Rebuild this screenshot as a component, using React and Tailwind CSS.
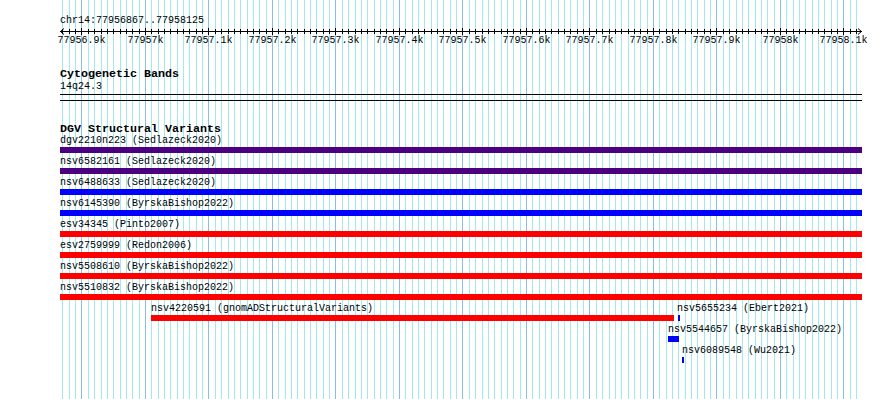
import React from "react";

const START = 77956867;
const X0 = 60.5;
const PX = 0.635;
const xOf = (bp) => Math.round(X0 + (bp - START) * PX) + 0.5;

const minor = [];
for (let bp = 77956870; bp <= 77958120; bp += 10) minor.push(bp);

const labels = [
  [77956900, "77956.9k"],
  [77957000, "77957k"],
  [77957100, "77957.1k"],
  [77957200, "77957.2k"],
  [77957300, "77957.3k"],
  [77957400, "77957.4k"],
  [77957500, "77957.5k"],
  [77957600, "77957.6k"],
  [77957700, "77957.7k"],
  [77957800, "77957.8k"],
  [77957900, "77957.9k"],
  [77958000, "77958k"],
  [77958100, "77958.1k"],
];

const fullRows = [
  { name: "dgv2210n223 (Sedlazeck2020)", color: "bg-[#4b0082]" },
  { name: "nsv6582161 (Sedlazeck2020)", color: "bg-[#4b0082]" },
  { name: "nsv6488633 (Sedlazeck2020)", color: "bg-[#0000ff]" },
  { name: "nsv6145390 (ByrskaBishop2022)", color: "bg-[#0000ff]" },
  { name: "esv34345 (Pinto2007)", color: "bg-[#ff0000]" },
  { name: "esv2759999 (Redon2006)", color: "bg-[#ff0000]" },
  { name: "nsv5508610 (ByrskaBishop2022)", color: "bg-[#ff0000]" },
  { name: "nsv5510832 (ByrskaBishop2022)", color: "bg-[#ff0000]" },
];

const Grid = () => (
  <svg className="absolute inset-0" width="890" height="399">
    {minor.map((bp) => (
      <line
        key={bp}
        x1={xOf(bp)}
        x2={xOf(bp)}
        y1="0"
        y2="399"
        stroke={bp % 100 === 0 ? "#86c0e6" : "#a4e8ee"}
        strokeWidth="1"
      />
    ))}
  </svg>
);

const Axis = () => (
  <svg width="890" height="8" className="block">
    <line x1="60" x2="862" y1="4.5" y2="4.5" stroke="#000" />
    <polyline points="64,1.5 60.5,4.5 64,7.5" fill="none" stroke="#000" />
    <polyline points="858,1.5 861.5,4.5 858,7.5" fill="none" stroke="#000" />
    {minor.map((bp) => (
      <line
        key={bp}
        x1={xOf(bp)}
        x2={xOf(bp)}
        y1={bp % 100 === 0 ? 1 : 2}
        y2={bp % 100 === 0 ? 8 : 7}
        stroke="#000"
      />
    ))}
  </svg>
);

export default function App() {
  return (
    <div
      className="relative w-[890px] h-[399px] overflow-hidden bg-white text-black text-[10px]"
      style={{ fontFamily: '"Liberation Mono", "DejaVu Sans Mono", monospace' }}
    >
      <Grid />
      <div className="relative flex flex-col pt-[15px]">
        {/* ruler */}
        <div className="ml-[60px] h-[12px] leading-[12px]">chr14:77956867..77958125</div>
        <Axis />
        <div className="relative h-[12px] leading-[12px]">
          {labels.map(([bp, text]) => (
            <span
              key={bp}
              className="absolute top-0 -translate-x-1/2 whitespace-nowrap"
              style={{ left: xOf(bp) }}
            >
              {text}
            </span>
          ))}
        </div>

        {/* cytogenetic bands */}
        <div className="ml-[60px] mt-[20px] h-[14px] leading-[14px] font-bold text-[11.66px]">
          Cytogenetic Bands
        </div>
        <div className="ml-[60px] h-[12px] leading-[12px]">14q24.3</div>
        <div className="ml-[60px] mt-[1px] w-[802px] h-[7px] border-y border-black" />

        {/* DGV */}
        <div className="ml-[60px] mt-[22px] h-[12px] leading-[12px] font-bold text-[11.66px]">
          DGV Structural Variants
        </div>
        <div className="ml-[60px] flex flex-col gap-[3px]">
          {fullRows.map((r) => (
            <div key={r.name} className="flex flex-col">
              <div className="h-[12px] leading-[12px] whitespace-nowrap">{r.name}</div>
              <div className={`h-[6px] w-[802px] ${r.color}`} />
            </div>
          ))}
          <div className="flex">
            <div className="ml-[91px] w-[523px] flex flex-col">
              <div className="h-[12px] leading-[12px] whitespace-nowrap">
                nsv4220591 (gnomADStructuralVariants)
              </div>
              <div className="h-[6px] w-[523px] bg-[#ff0000]" />
            </div>
            <div className="ml-[3px] flex flex-col">
              <div className="h-[12px] leading-[12px] whitespace-nowrap">nsv5655234 (Ebert2021)</div>
              <div className="ml-[1px] h-[6px] w-[2px] bg-[#0000ff]" />
            </div>
          </div>
          <div className="ml-[608px] flex flex-col">
            <div className="h-[12px] leading-[12px] whitespace-nowrap">nsv5544657 (ByrskaBishop2022)</div>
            <div className="h-[6px] w-[11px] bg-[#0000ff]" />
          </div>
          <div className="ml-[622px] flex flex-col">
            <div className="h-[12px] leading-[12px] whitespace-nowrap">nsv6089548 (Wu2021)</div>
            <div className="h-[6px] w-[2px] bg-[#0000ff]" />
          </div>
        </div>
      </div>
    </div>
  );
}
